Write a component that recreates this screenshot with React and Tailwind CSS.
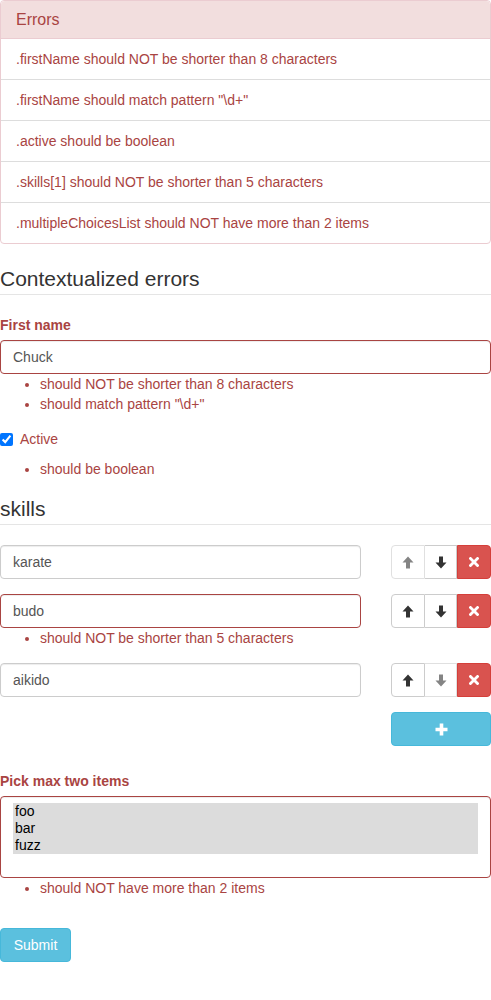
import React from "react";

const font = { fontFamily: '"Liberation Sans", Arial, Helvetica, sans-serif' };

function ArrowUp() {
  return (
    <svg width="12" height="13" viewBox="0 0 12 13">
      <path d="M6 0.5 L11.5 6.5 H8 V12.5 H4 V6.5 H0.5 Z" fill="#333" />
    </svg>
  );
}
function ArrowDown() {
  return (
    <svg width="12" height="13" viewBox="0 0 12 13">
      <path d="M6 12.5 L11.5 6.5 H8 V0.5 H4 V6.5 H0.5 Z" fill="#333" />
    </svg>
  );
}
function Remove() {
  return (
    <svg width="10" height="10" viewBox="0 0 10 10">
      <path d="M1.5 1.5 L8.5 8.5 M8.5 1.5 L1.5 8.5" stroke="#fff" strokeWidth="2.8" strokeLinecap="square" />
    </svg>
  );
}
function Plus() {
  return (
    <svg width="13" height="13" viewBox="0 0 13 13">
      <path d="M6.5 0.5 V12.5 M0.5 6.5 H12.5" stroke="#fff" strokeWidth="3.6" />
    </svg>
  );
}

function ErrList({ items }) {
  return (
    <ul className="list-disc pl-10 text-[#a94442] text-[14px] leading-5">
      {items.map((t) => (
        <li key={t}>{t}</li>
      ))}
    </ul>
  );
}

function SkillRow({ value, error, upDisabled, downDisabled, errors }) {
  return (
    <div className="mb-[15px]">
      <div className="flex items-start gap-[30px]">
        <input
          readOnly
          defaultValue={value}
          className={`flex-1 min-w-0 h-[34px] px-3 py-1.5 rounded border text-[14px] text-[#555] shadow-[inset_0_1px_1px_rgba(0,0,0,0.075)] outline-none ${
            error ? "border-[#a94442]" : "border-[#ccc]"
          }`}
        />
        <div className="flex w-[100px] h-[34px]">
          <button
            className={`flex-1 flex items-center justify-center bg-white border border-[#ccc] rounded-l ${upDisabled ? "opacity-60" : ""}`}
          >
            <ArrowUp />
          </button>
          <button
            className={`flex-1 flex items-center justify-center bg-white border border-l-0 border-[#ccc] ${downDisabled ? "opacity-60" : ""}`}
          >
            <ArrowDown />
          </button>
          <button className="flex-1 flex items-center justify-center bg-[#d9534f] border border-[#d43f3a] rounded-r">
            <Remove />
          </button>
        </div>
      </div>
      {errors && <ErrList items={errors} />}
    </div>
  );
}

export default function App() {
  const panelErrors = [
    ".firstName should NOT be shorter than 8 characters",
    '.firstName should match pattern "\\d+"',
    ".active should be boolean",
    ".skills[1] should NOT be shorter than 5 characters",
    ".multipleChoicesList should NOT have more than 2 items",
  ];
  return (
    <div className="w-[491px] bg-white text-[#333] text-[14px] leading-5" style={font}>
      {/* Errors panel */}
      <div className="border border-[#ebccd1] rounded mb-5">
        <div className="bg-[#f2dede] text-[#a94442] px-[15px] py-[10px] border-b border-[#ebccd1] rounded-t">
          <h3 className="text-[16px] leading-[17px]">Errors</h3>
        </div>
        <ul>
          {panelErrors.map((t, i) => (
            <li
              key={t}
              className={`px-[15px] py-[10px] text-[#a94442] leading-5 ${i > 0 ? "border-t border-[#ddd]" : ""}`}
            >
              {t}
            </li>
          ))}
        </ul>
      </div>

      <div className="text-[21px] leading-[30px] border-b border-[#e5e5e5] mb-5 text-[#333]">
        Contextualized errors
      </div>

      <div className="mb-[15px]">
        <label className="block font-bold text-[#a94442] mb-[5px]">First name</label>
        <input
          readOnly
          defaultValue="Chuck"
          className="w-full h-[34px] px-3 py-1.5 rounded border border-[#a94442] text-[14px] text-[#555] shadow-[inset_0_1px_1px_rgba(0,0,0,0.075)] outline-none"
        />
        <ErrList items={["should NOT be shorter than 8 characters", 'should match pattern "\\d+"']} />
      </div>

      <div className="mb-[15px]">
        <label className="flex items-center h-5 text-[#a94442] mb-[10px]">
          <input type="checkbox" defaultChecked className="w-[13px] h-[13px] m-0 mr-[7px]" />
          Active
        </label>
        <ErrList items={["should be boolean"]} />
      </div>

      <div className="text-[21px] leading-[30px] border-b border-[#e5e5e5] mb-5 text-[#333]">skills</div>

      <SkillRow value="karate" upDisabled />
      <SkillRow value="budo" error errors={["should NOT be shorter than 5 characters"]} />
      <SkillRow value="aikido" downDisabled />

      <div className="flex justify-end">
        <button className="w-[100px] h-[34px] flex items-center justify-center bg-[#5bc0de] border border-[#46b8da] rounded">
          <Plus />
        </button>
      </div>

      <div className="mt-[25px]">
        <label className="block font-bold text-[#a94442] mb-[5px]">Pick max two items</label>
        <div className="h-[82px] border border-[#a94442] rounded pt-[6px] px-3 bg-white shadow-[inset_0_1px_1px_rgba(0,0,0,0.075)]">
          <div className="bg-[#dcdcdc] text-black text-[14px] leading-[17px]">
            <div className="px-[2px]">foo</div>
            <div className="px-[2px]">bar</div>
            <div className="px-[2px]">fuzz</div>
          </div>
        </div>
        <ErrList items={["should NOT have more than 2 items"]} />
      </div>

      <div className="mt-[30px] pb-[38px]">
        <button className="h-[34px] w-[71px] bg-[#5bc0de] border border-[#46b8da] rounded text-white text-[14px]">
          Submit
        </button>
      </div>
    </div>
  );
}
